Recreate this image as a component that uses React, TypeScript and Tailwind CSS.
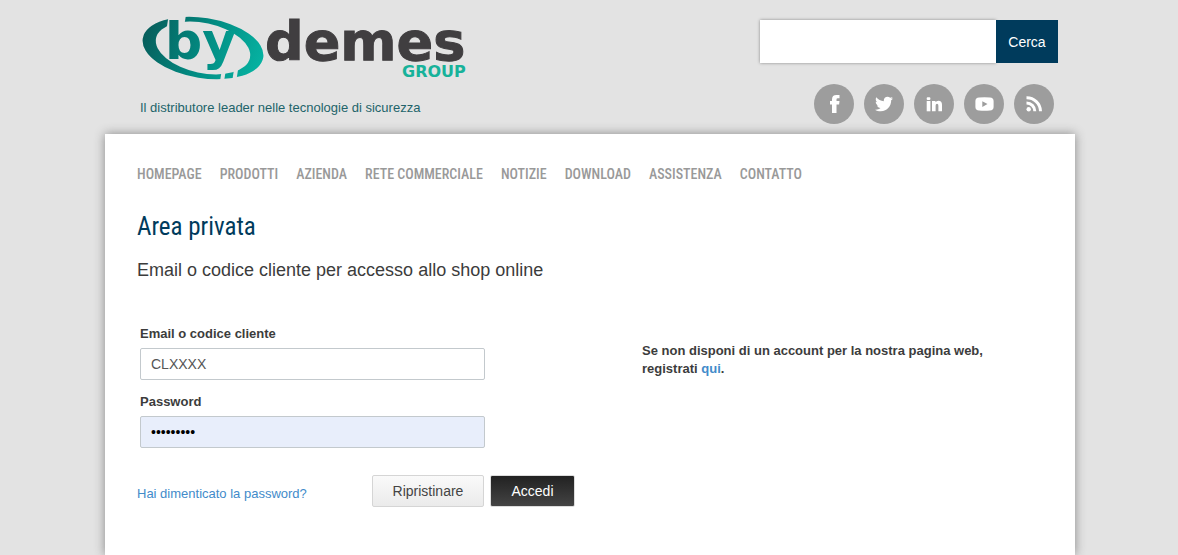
import { useState } from "react";
import type { FormEvent } from "react";
import { FaTwitter } from "react-icons/fa";

const navItems = [
  "Homepage",
  "Prodotti",
  "Azienda",
  "Rete commerciale",
  "Notizie",
  "Download",
  "Assistenza",
  "Contatto",
];

// --- Icons ---
function FacebookIcon() {
  return (
    <svg width="20" height="20" viewBox="0 0 20 20" fill="currentColor">
      <path d="M15.5 1v3.3h-1.7q-1.3 0-1.3 1.3V7h3l-.4 3.4h-2.6V19H8v-8.6H6V7h2V5.4Q8 1 12.4 1z" />
    </svg>
  );
}

function LinkedinIcon() {
  return (
    <svg width="20" height="20" viewBox="0 0 20 20" fill="currentColor">
      <rect x="2.7" y="3.2" width="3.7" height="2.8" rx="1" />
      <rect x="2.7" y="7" width="3.7" height="10.3" />
      <path d="M8 7h3.5v1.3Q12.4 6.8 14.4 6.8 18 6.8 18 10.8v6.5h-3.6v-5.6q0-1.9-1.4-1.9t-1.4 1.9v5.6H8z" />
    </svg>
  );
}

function YoutubeIcon() {
  return (
    <svg width="20" height="20" viewBox="0 0 20 20" fill="currentColor">
      <path
        fillRule="evenodd"
        d="M5 3.5Q10.5 3 16 3.5 19.5 3.8 19.6 7v6q-.1 3.2-3.6 3.5-5.5.5-11 0Q1.5 16.2 1.4 13V7Q1.5 3.8 5 3.5zM8.300 7.200v5.800l5.200-2.900z"
      />
    </svg>
  );
}

function RssIcon() {
  return (
    <svg width="20" height="20" viewBox="0 0 20 20" fill="none" stroke="currentColor" strokeWidth="3">
      <circle cx="4.7" cy="15.2" r="2.2" fill="currentColor" stroke="none" />
      <path d="M2.5 9a8.3 8.3 0 0 1 8.3 8.3" />
      <path d="M2.5 3.7a13.8 13.8 0 0 1 14 13.6" />
    </svg>
  );
}

function TwitterIcon() {
  return <FaTwitter size={18} />;
}

const socials = [
  { label: "Facebook", Icon: FacebookIcon },
  { label: "Twitter", Icon: TwitterIcon },
  { label: "LinkedIn", Icon: LinkedinIcon },
  { label: "YouTube", Icon: YoutubeIcon },
  { label: "RSS", Icon: RssIcon },
];

function Logo() {
  return (
    <svg
      width="330"
      height="72"
      viewBox="140 12 330 72"
      role="img"
      aria-label="by demes group"
      className="font-['DejaVu_Sans'] font-bold"
    >
      <defs>
        <linearGradient id="teal" gradientUnits="userSpaceOnUse" x1="143" y1="30" x2="263" y2="60">
          <stop offset="0" stopColor="#075c5a" />
          <stop offset="0.5" stopColor="#028a81" />
          <stop offset="1" stopColor="#06b3a2" />
        </linearGradient>
        <mask id="ring" maskUnits="userSpaceOnUse" x="140" y="12" width="130" height="72">
          <rect x="140" y="12" width="130" height="72" fill="white" />
          <ellipse cx="203" cy="48" rx="48" ry="25" transform="rotate(3 203 48)" fill="black" />
          {/* slots beside the stems */}
          <rect x="164" y="12" width="17" height="36" fill="black" />
          <rect x="225" y="50" width="4" height="34" fill="black" />
          <rect x="237" y="50" width="4" height="34" fill="black" />
        </mask>
      </defs>
      <ellipse
        cx="203"
        cy="48"
        rx="61"
        ry="30"
        transform="rotate(9 203 48)"
        fill="url(#teal)"
        mask="url(#ring)"
      />
      <text x="165" y="59" fontSize="52" fill="url(#teal)">by</text>
      <text x="265" y="60" fontSize="54" fill="#403e40" stroke="#403e40">demes</text>
      <text x="402" y="77" fontSize="16" fill="#17b29a">GROUP</text>
    </svg>
  );
}

export default function App() {
  const [query, setQuery] = useState("");
  const [user, setUser] = useState("CLXXXX");
  const [password, setPassword] = useState("contrasen");

  const handleSubmit = (e: FormEvent) => {
    e.preventDefault();
  };

  const handleReset = () => {
    setUser("");
    setPassword("");
  };

  return (
    <div className="min-h-screen flex flex-col bg-[#e3e3e3] pl-0.5 font-['Liberation_Sans',Arial,sans-serif] text-[13px] text-[#3c3c3c]">
      <div className="mx-auto w-full max-w-[970px] flex-1 flex flex-col">
        <header className="flex justify-between pl-[35px] pr-[17px] pb-2.5">
          <div className="pt-3">
            <a href="#" className="block">
              <Logo />
            </a>
            <p className="mt-3.5 leading-5 text-[#22636a]">
              Il distributore leader nelle tecnologie di sicurezza
            </p>
          </div>

          <div className="pt-5 flex flex-col items-end">
            <form className="flex h-[43px]" onSubmit={handleSubmit}>
              <input
                type="text"
                aria-label="Cerca"
                value={query}
                onChange={(e) => setQuery(e.target.value)}
                className="w-[236px] bg-white px-3 outline-none shadow-[0_0_3px_#888]"
              />
              <button type="submit" className="relative w-[62px] bg-[#003b5c] text-sm text-white">
                Cerca
              </button>
            </form>
            <ul className="mt-[21px] mr-1 flex gap-2.5">
              {socials.map(({ label, Icon }) => (
                <li key={label}>
                  <a
                    href="#"
                    aria-label={label}
                    className="flex size-10 items-center justify-center rounded-full bg-[#9d9d9d] text-white"
                  >
                    <Icon />
                  </a>
                </li>
              ))}
            </ul>
          </div>
        </header>

        <main className="flex-1 bg-white px-8 pt-[30px] shadow-[0_0_10px_#888]">
          <nav>
            <ul className="flex flex-wrap gap-x-[18px] font-['Roboto_Condensed',sans-serif] text-sm leading-5 font-medium uppercase text-[#999]">
              {navItems.map((item) => (
                <li key={item}>
                  <a href="#">{item}</a>
                </li>
              ))}
            </ul>
          </nav>

          <h1 className="mt-[27px] font-['Roboto_Condensed',sans-serif] text-[25px] leading-8 text-[#003b5c]">
            Area privata
          </h1>
          <h2 className="mt-[15px] text-lg leading-6">
            Email o codice cliente per accesso allo shop online
          </h2>

          <div className="mt-[43px] flex">
            <form className="w-[505px] shrink-0" onSubmit={handleSubmit}>
              <div className="w-[348px] pl-[3px]">
                <label htmlFor="user" className="block font-bold leading-[18px]">
                  Email o codice cliente
                </label>
                <input
                  id="user"
                  type="text"
                  value={user}
                  onChange={(e) => setUser(e.target.value)}
                  className="mt-[5px] block h-8 w-full rounded-xs border border-[#c3c9cd] bg-white px-2.5 text-sm text-[#555]"
                />
                <label htmlFor="password" className="mt-[13px] block font-bold leading-[18px]">
                  Password
                </label>
                <input
                  id="password"
                  type="password"
                  value={password}
                  onChange={(e) => setPassword(e.target.value)}
                  className="mt-[5px] block h-8 w-full rounded-xs border border-[#c3c9cd] bg-[#e8eefb] px-2.5 text-sm text-black"
                />
              </div>

              <div className="mt-[27px] flex items-center justify-between pr-[67px]">
                <a href="#" className="pt-1.5 text-[#428bca]">
                  Hai dimenticato la password?
                </a>
                <div className="flex gap-1.5">
                  <button
                    type="button"
                    onClick={handleReset}
                    className="h-8 w-28 rounded-xs border border-[#d5d5d5] bg-linear-to-b from-[#fafafa] to-[#ebebeb] text-sm text-[#444]"
                  >
                    Ripristinare
                  </button>
                  <button
                    type="submit"
                    className="h-8 w-[85px] rounded-xs border border-[#ddd] bg-linear-to-b from-[#222] to-[#444] text-sm text-white"
                  >
                    Accedi
                  </button>
                </div>
              </div>
            </form>

            <p className="mt-[17px] w-[360px] font-bold leading-[18px]">
              Se non disponi di un account per la nostra pagina web, registrati{" "}
              <a href="#" className="text-[#428bca]">
                qui
              </a>
              .
            </p>
          </div>
        </main>
      </div>
    </div>
  );
}
